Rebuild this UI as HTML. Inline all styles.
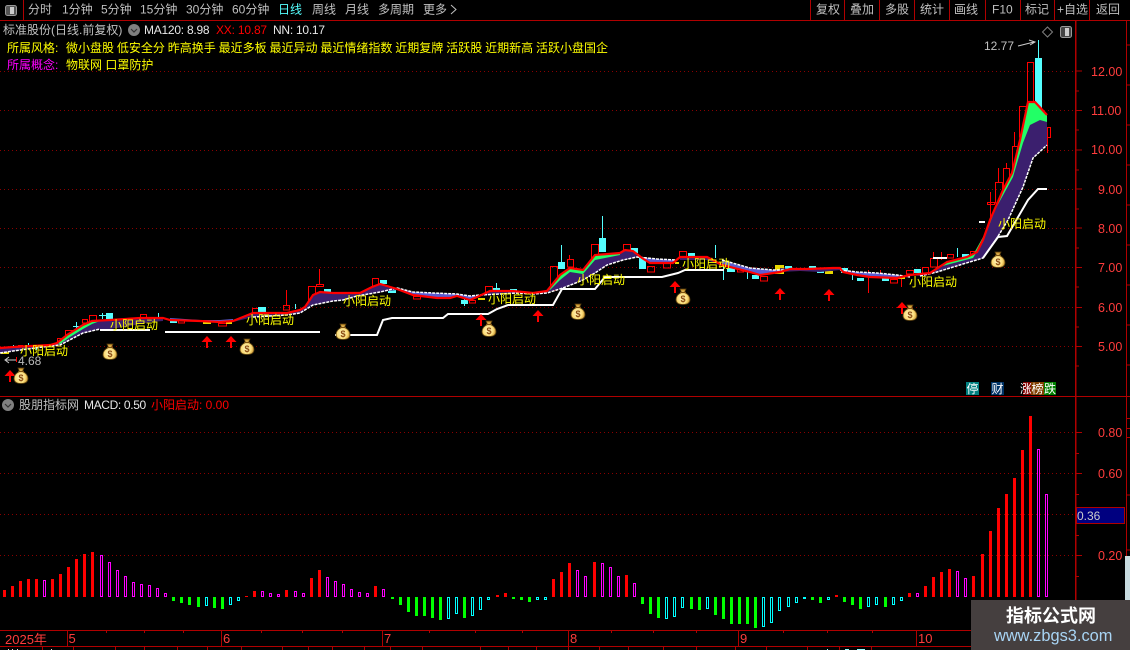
<!DOCTYPE html>
<html><head><meta charset="utf-8"><title>标准股份</title>
<style>
html,body{margin:0;padding:0;background:#000;width:1130px;height:650px;overflow:hidden}
svg{display:block}
text{font-family:"Liberation Sans","WenQuanYi Zen Hei","Noto Sans CJK SC",sans-serif;font-size:12px}
.m{fill:#c0c0c0}.y{fill:#ffff00}.a{fill:#ff3c3c;font-size:12.5px}.w{fill:#e8e8e8;letter-spacing:-.25px}
.t{fill:#ff3c3c;font-size:13px}
.d{font-size:9px;font-weight:bold;fill:#8a4a10;text-anchor:middle}
</style></head><body>
<svg width="1130" height="650" viewBox="0 0 1130 650" xmlns="http://www.w3.org/2000/svg">
<defs>
<radialGradient id="g" cx=".45" cy=".6" r=".6"><stop offset="0" stop-color="#fff6c0"/><stop offset=".6" stop-color="#fbdc78"/><stop offset="1" stop-color="#b87c18"/></radialGradient>
<g id="bag"><path d="M-3-8H3L1.500-4.500C5-3 7-.5 7 2.500 7 6 4 7.500 0 7.500S-7 6-7 2.500C-7-.5-5-3-1.500-4.500Z" fill="url(#g)" stroke="#5a4010" stroke-width=".8"/><path d="M-3-4.500H3" stroke="#7a5010" stroke-width="1.200"/></g>
<path id="ar" d="M0 0L5.500 6H1V12H-1V6H-5.500Z" fill="#f00"/>
</defs>

<!-- frame lines -->
<g stroke="#b00000" fill="none">
<path d="M0 20.500H1130M23.500 0V20M810.500 0V20M844.500 0V20M879.500 0V20M914.500 0V20M949.500 0V20M985.500 0V20M1020.500 0V20M1054.500 0V20M1089.500 0V20"/>
<path d="M0 396.500H1130M1075.500 20V600M1126.500 20V600" stroke-width="1"/>
<path d="M1076 20V600" />
<path d="M0 630.500H971M0 646.500H971"/>
<path d="M1076 71H1082M1076 91H1079M1076 110.500H1082M1076 130H1079M1076 150H1082M1076 170H1079M1076 189H1082M1076 209H1079M1076 228H1082M1076 248H1079M1076 267.500H1082M1076 287H1079M1076 307.500H1082M1076 327H1079M1076 346.500H1082M1076 366H1079"/>
<path d="M1076 432.500H1082M1076 453.500H1079M1076 473.500H1082M1076 494.500H1079M1076 514.500H1082M1076 535.500H1079M1076 555.500H1082M1076 576.500H1079"/>
<path d="M1126 45H1130M1126 85H1130M1126 125H1130M1126 165H1130M1126 205H1130M1126 245H1130M1126 285H1130M1126 325H1130M1126 365H1130M1126 418.500H1130M1126 428.500H1130M1126 437.500H1130M1126 495H1130M1126 550H1130"/>
<path d="M67.500 630V646M221.500 630V646M382.500 630V646M568.500 630V646M738.500 630V646M916.500 630V646"/>
<path d="M106.500 630V633M144.500 630V633M183.500 630V633M261.500 630V633M302.500 630V633M342.500 630V633M429.500 630V633M475.500 630V633M522.500 630V633M611.500 630V633M653.500 630V633M696.500 630V633M783.500 630V633M827.500 630V633M872.500 630V633"/>
<path d="M42.500 646V650M73.500 646V650M115.500 646V650M144.500 646V650M177.500 646V650M207.500 646V650M241.500 646V650M282.500 646V650M308.500 646V650M332.500 646V650M364.500 646V650M390.500 646V650M422.500 646V650M480.500 646V650M508.500 646V650M536.500 646V650M568.500 646V650M599.500 646V650M628.500 646V650M663.500 646V650M696.500 646V650M735.500 646V650M766.500 646V650M807.500 646V650M839.500 646V650M871.500 646V650"/>
</g>

<!-- grid -->
<g stroke="#8a0000" stroke-dasharray="1 3" fill="none">
<path d="M0 71.500H1075M0 110.500H1075M0 150.500H1075M0 189.500H1075M0 228.500H1075M0 267.500H1075M0 307.500H1075M0 346.500H1075"/>
<path d="M0 432.500H1075M0 473.500H1075M0 514.500H1075M0 555.500H1075"/>
</g>

<!-- toolbar -->
<rect x="5.500" y="5.500" width="11" height="10" rx="2" fill="#555" stroke="#999"/><rect x="10" y="7" width="4" height="7" fill="#ccc"/>
<g class="m">
<text class="m" x="28" y="13.500">分时</text><text class="m" x="62" y="13.500">1分钟</text><text class="m" x="101" y="13.500">5分钟</text><text class="m" x="140" y="13.500">15分钟</text><text class="m" x="186" y="13.500">30分钟</text><text class="m" x="232" y="13.500">60分钟</text>
<text x="278" y="13.500" fill="#55ffff">日线</text>
<text class="m" x="312" y="13.500">周线</text><text class="m" x="345" y="13.500">月线</text><text class="m" x="378" y="13.500">多周期</text><text class="m" x="423" y="13.500">更多</text>
<text class="m" x="816" y="13.500">复权</text><text class="m" x="850" y="13.500">叠加</text><text class="m" x="885" y="13.500">多股</text><text class="m" x="920" y="13.500">统计</text><text class="m" x="954" y="13.500">画线</text><text class="m" x="992" y="13.500">F10</text><text class="m" x="1025" y="13.500">标记</text><text class="m" x="1057" y="13.500">+自选</text><text class="m" x="1096" y="13.500">返回</text>
</g>
<path d="M451 5L456 9.500L451 14" stroke="#c0c0c0" fill="none"/>

<!-- header -->
<text class="m" x="3" y="34">标准股份(日线.前复权)</text>
<circle cx="134" cy="30" r="6" fill="#808080"/><path d="M131 29L134 32L137 29" stroke="#333" fill="none" stroke-width="1.200"/>
<text class="w" x="144" y="34">MA120: 8.98</text><text x="216" y="34" fill="#f00" style="letter-spacing:-.2px">XX: 10.87</text><text class="w" x="273" y="34">NN: 10.17</text>
<text class="y" x="7" y="52">所属风格:</text>
<text class="y" x="66" y="52" style="word-spacing:-.45px">微小盘股 低安全分 昨高换手 最近多板 最近异动 最近情绪指数 近期复牌 活跃股 近期新高 活跃小盘国企</text>
<text x="7" y="69" fill="#ff00ff">所属概念:</text>
<text class="y" x="66" y="69">物联网 口罩防护</text>
<path d="M1047.500 27L1052.500 32L1047.500 37L1042.500 32Z" fill="none" stroke="#808080"/>
<rect x="1060.500" y="26.500" width="11" height="11" rx="2" fill="#444" stroke="#999"/><rect x="1065" y="28" width="4" height="8" fill="#ccc"/>

<!-- axis labels -->
<text class="a" x="1091" y="76">12.00</text><text class="a" x="1091" y="115">11.00</text><text class="a" x="1091" y="154">10.00</text><text class="a" x="1098" y="194">9.00</text><text class="a" x="1098" y="233">8.00</text><text class="a" x="1098" y="272">7.00</text><text class="a" x="1098" y="312">6.00</text><text class="a" x="1098" y="351">5.00</text>
<text class="a" x="1098" y="437">0.80</text><text class="a" x="1098" y="478">0.60</text><text class="a" x="1098" y="560">0.20</text>
<rect x="1076.500" y="507.500" width="48" height="16" fill="#000080" stroke="#b00000"/><text x="1077" y="520" fill="#ccc" font-size="12">0.36</text>

<!-- candle wicks and hollow -->
<g fill="none" stroke="#f00">
<path d="M1014.500 132V146M1006.500 163V168M998.500 168V182M990.500 192V217M1047.500 137V153M286.500 290V305M319.500 269V284M561.500 258V262M569.500 255V259M868.500 270V293M880.500 270V274M901.500 278V287M933.500 252V258M941.500 252V260M16.500 357V362"/>
<path d="M1027.500 62.500H1033.500V102H1027.500ZM1019.500 106.500H1026.500V137H1019.500ZM1012.500 146.500H1018.500V170H1012.500ZM1003.500 168.500H1009.500V187H1003.500ZM995.500 182.500H1002.500V203H995.500ZM987.500 202.500H994.500V204.500H987.500ZM1047.500 127.500H1050.500V137.500H1047.500Z"/>
<path d="M18.500 345.500H22.500V349H18.500ZM57.500 338.500H63.500V343H57.500ZM65.500 330.500H72.500V338H65.500ZM82.500 319.500H87.500V323H82.500ZM89.500 315.500H96.500V321H89.500ZM140.500 314.500H146.500V319H140.500ZM178.500 320.500H184.500V323H178.500ZM218.500 323.500H226.500V326H218.500ZM252.500 308.500H258.500V313H252.500ZM283.500 305.500H289.500V310H283.500Z"/>
<path d="M308.500 286.500H315.500V302H308.500ZM316.500 284.500H323.500V286.500H316.500ZM372.500 278.500H378.500V286H372.500ZM413.500 296.500H420.500V299H413.500ZM469.500 300.500H475.500V303H469.500ZM485.500 286.500H492.500V293H485.500ZM550.500 266.500H557.500V290H550.500ZM567.500 259.500H573.500V267H567.500ZM591.500 244.500H598.500V262H591.500ZM623.500 244.500H630.500V250H623.500ZM647.500 266.500H654.500V272H647.500ZM663.500 263.500H670.500V268H663.500ZM679.500 251.500H686.500V257H679.500ZM737.500 268.500H743.500V272H737.500ZM760.500 276.500H767.500V281H760.500Z"/>
<path d="M890.500 279.500H897.500V283H890.500ZM906.500 270.500H913.500V274H906.500ZM922.500 267.500H928.500V273H922.500ZM930.500 258.500H937.500V267H930.500ZM947.500 254.500H953.500V258H947.500ZM970.500 251.500H975.500V257H970.500Z"/>
</g>
<!-- cyan candles -->
<g fill="#55ffff">
<rect x="1035" y="58" width="7" height="52"/><rect x="1038" y="40" width="1" height="18"/>
<path d="M13 345h1v5h-1zM28 343h1v6h-1zM36 346h1v4h-1zM73 326h7v1h-7zM76 322h1v8h-1zM99 315h7v1h-7zM102 313h1v6h-1z"/>
<rect x="106" y="313" width="7" height="6"/><rect x="158" y="313" width="1" height="7"/><rect x="170" y="319" width="7" height="4"/><rect x="258" y="307" width="8" height="5"/><rect x="295" y="304" width="1" height="5"/>
<rect x="324" y="289" width="7" height="4"/><rect x="380" y="280" width="7" height="4"/><rect x="388" y="290" width="8" height="3"/><rect x="461" y="300" width="7" height="4"/><rect x="464" y="295" width="1" height="11"/><rect x="493" y="288" width="7" height="4"/><rect x="496" y="283" width="1" height="5"/><rect x="510" y="289" width="7" height="3"/>
<rect x="558" y="262" width="7" height="7"/><rect x="561" y="245" width="1" height="17"/><rect x="599" y="238" width="7" height="14"/><rect x="602" y="216" width="1" height="22"/><rect x="631" y="248" width="7" height="5"/><rect x="639" y="257" width="7" height="12"/><rect x="688" y="253" width="7" height="4"/><rect x="715" y="245" width="1" height="13"/><rect x="723" y="263" width="1" height="17"/><rect x="727" y="268" width="8" height="4"/><rect x="747" y="272" width="1" height="7"/><rect x="752" y="275" width="7" height="4"/>
<rect x="785" y="266" width="7" height="3"/><rect x="809" y="266" width="7" height="3"/><rect x="817" y="269" width="7" height="4"/><rect x="841" y="268" width="7" height="5"/><rect x="852" y="273" width="1" height="7"/><rect x="857" y="278" width="7" height="3"/><rect x="882" y="277" width="7" height="4"/><rect x="914" y="269" width="7" height="4"/><rect x="957" y="248" width="1" height="9"/><rect x="962" y="254" width="7" height="3"/>
</g>
<g fill="#e8d800">
<rect x="1" y="350" width="8" height="4"/><rect x="203" y="322" width="8" height="2"/><rect x="226" y="322" width="6" height="2"/><rect x="478" y="298" width="7" height="2"/><rect x="675" y="262" width="4" height="2"/><rect x="775" y="265" width="9" height="9"/><rect x="825" y="271" width="8" height="3"/><rect x="898" y="277" width="7" height="2"/>
</g>

<!-- bands -->
<g fill="#3b1f6e">
<path d="M0 348L13 347 50 345 57 343 67 335 83 325 92 321 110 320 140 318 163 318V321L150 322 130 326 110 329 100 329 83 333 60 345 50 346 13 351 0 353Z"/>
<path d="M233 321L253 313 287 313 300 310 305 307 313 295 320 292 333 293 360 293 372 287 380 284 387 286 397 289V290L380 292 357 296 343 300 333 301 313 305 300 313 287 315 253 317 233 322Z"/>
<path d="M480 295L490 291 513 291 533 293 547 292V293L533 294 517 293 500 294 480 296Z"/>
<path d="M547 291L560 275 570 268 583 270 595 255 620 253 625 250 633 251 642 258 637 257 623 260 607 265 595 273 583 280 563 288 547 292Z"/>
<path d="M680 257H707L722 265V266L707 260 680 260Z"/>
<path d="M780 268L790 269 807 269 833 268 840 268V270L820 272 800 271 780 272Z"/>
<path d="M910 275L930 273 947 262 967 257 977 252 983 240 990 220 1003 190 1012 173 1020 140 1028 102 1035 102 1047 115V145L1033 158 1023 187 1008 220 997 238 983 258 963 264 937 272 920 276Z"/>
</g>
<g fill="#5c5cd0">
<path d="M170 318L200 320 220 320 233 319V321L220 322 200 321 170 320Z"/>
<path d="M397 288L413 292 433 293 457 294 470 296 480 295 477 297 470 300 457 296 450 298 437 298 413 295 397 289Z"/>
<path d="M640 257L657 259 676 260 673 263 650 263 642 258Z"/>
<path d="M722 260L727 262 750 268 773 270 785 270 780 272 760 275 750 272 722 265Z"/>
<path d="M840 270L857 272 877 273 897 275 910 277 910 275 897 278 870 277 857 275 843 272Z"/>
</g>
<g fill="#22ff66">
<path d="M57 343L67 335 83 325 92 321 100 321 92 324 83 329 70 337 60 344Z"/>
<path d="M549 289L560 275 570 268 583 270 595 255 605 254 620 254V255L605 258 595 260 583 274 570 272 560 280 550 290Z"/>
<path d="M935 268L947 262 967 257 973 255 983 237 990 220 1003 190 1012 173 1020 140 1028 102 1035 102 1047 115V122L1040 120 1030 125 1023 143 1013 177 995 210 983 242 973 258 950 264Z"/>
</g>
<!-- white dotted edges -->
<g fill="none" stroke="#fff" stroke-width="1.500" stroke-dasharray="3 1">
<path d="M0 353L13 351 50 346 60 345 83 333 100 329"/>
<path d="M253 317L287 315 300 313 313 305 333 301 343 300 357 296 380 292 397 288 413 292 433 293 457 294 470 296 480 295 500 294 517 293 533 294 547 293 563 288 583 280 595 273 607 265 623 260 637 257 657 259 676 260"/>
<path d="M722 260L750 268 773 270 785 270"/>
<path d="M840 270L857 272 877 273 897 275 910 277"/>
<path d="M920 276L937 272 963 264 983 258 997 238 1008 220 1023 187 1033 158 1047 145"/>
</g>
<!-- red MA -->
<path fill="none" stroke="#f00" stroke-width="2.200" d="M0 348L13 347 50 345 57 343 67 335 83 325 92 321 110 320 140 318 163 318 170 320 200 321 220 322 233 321 253 313 287 313 300 310 305 307 313 295 320 292 333 293 360 293 372 287 380 284 387 286 397 289 413 295 437 298 450 298 457 296 470 300 477 297 490 291 513 291 533 293 547 291 560 275 570 268 583 270 595 255 620 253 625 250 633 251 642 258 650 263 673 263 680 257 707 257 722 265 750 272 760 275 780 272 790 269 807 269 833 268 840 268 843 272 857 275 870 277 897 278 910 275 930 273 947 262 967 257 977 252 983 240 990 220 1003 190 1012 173 1020 140 1028 102 1035 102 1047 115"/>
<!-- thick white -->
<g fill="none" stroke="#fff" stroke-width="2">
<path d="M100 330H150M165 332H320M335 335H377L383 320 392 318H443L448 314H488L497 309 508 305H553L562 289H595L605 277H662L678 273 685 270H724"/>
<path d="M933 258H947M979 222H985M983 258L998 237 1007 236 1028 200 1038 189H1047"/>
</g>

<!-- labels -->
<g class="y">
<text class="y" x="20" y="355">小阳启动</text><text class="y" x="110" y="329">小阳启动</text><text class="y" x="246" y="324">小阳启动</text><text class="y" x="343" y="305">小阳启动</text><text class="y" x="488" y="303">小阳启动</text><text class="y" x="577" y="284">小阳启动</text><text class="y" x="682" y="268">小阳启动</text><text class="y" x="909" y="286">小阳启动</text><text class="y" x="998" y="228">小阳启动</text>
</g>
<text x="18" y="365" fill="#b8b8b8">4.68</text>
<path d="M16 360H6M9 357L5 360L9 363" stroke="#ccc" fill="none"/>
<text x="984" y="50" fill="#c0c0c0">12.77</text>
<path d="M1018 46L1034 42M1029 40L1035 42L1030 45" stroke="#ccc" fill="none"/>

<!-- arrows -->
<use href="#ar" x="10" y="370"/><use href="#ar" x="207" y="336"/><use href="#ar" x="231" y="336"/><use href="#ar" x="481" y="314"/><use href="#ar" x="538" y="310"/><use href="#ar" x="675" y="281"/><use href="#ar" x="780" y="288"/><use href="#ar" x="829" y="289"/><use href="#ar" x="902" y="302"/>
<!-- bags -->
<use href="#bag" x="21" y="376"/><text class="d" x="21" y="381">$</text>
<use href="#bag" x="110" y="352"/><text class="d" x="110" y="357">$</text>
<use href="#bag" x="247" y="347"/><text class="d" x="247" y="352">$</text>
<use href="#bag" x="343" y="332"/><text class="d" x="343" y="337">$</text>
<use href="#bag" x="489" y="329"/><text class="d" x="489" y="334">$</text>
<use href="#bag" x="578" y="312"/><text class="d" x="578" y="317">$</text>
<use href="#bag" x="683" y="297"/><text class="d" x="683" y="302">$</text>
<use href="#bag" x="910" y="313"/><text class="d" x="910" y="318">$</text>
<use href="#bag" x="998" y="260"/><text class="d" x="998" y="265">$</text>

<!-- badges -->
<rect x="966" y="382" width="13" height="13" fill="#008080"/><text x="966.500" y="393" fill="#fff">停</text>
<rect x="991" y="382" width="13" height="13" fill="#003366"/><text x="991.500" y="393" fill="#fff">财</text>
<rect x="1023" y="382" width="8" height="13" fill="#800000"/><text x="1020" y="393" fill="#fff">涨</text>
<rect x="1031" y="382" width="13" height="13" fill="#804000"/><text x="1031.500" y="393" fill="#fff">榜</text>
<rect x="1044" y="382" width="12" height="13" fill="#008000"/><text x="1044" y="393" fill="#fff">跌</text>

<!-- MACD header -->
<circle cx="8" cy="405" r="6" fill="#808080"/><path d="M5 404L8 407L11 404" stroke="#333" fill="none" stroke-width="1.200"/>
<text class="m" x="19" y="409">股朋指标网</text><text class="w" x="84" y="409" style="letter-spacing:-.35px">MACD: 0.50</text><text x="151" y="409" fill="#f00">小阳启动: 0.00</text>

<!-- MACD bars -->
<path fill="#f00" d="M3 590h3V597h-3zM11 586h3V597h-3zM19 581h3V597h-3zM27 579h3V597h-3zM35 579h3V597h-3zM51 579h3V597h-3zM59 574h3V597h-3zM67 567h3V597h-3zM75 559h3V597h-3zM83 554h3V597h-3zM91 552h3V597h-3zM245 596h3V597h-3zM253 591h3V597h-3zM285 590h3V597h-3zM310 578h3V597h-3zM318 570h3V597h-3zM374 586h3V597h-3zM496 595h3V597h-3zM504 593h3V597h-3zM552 579h3V597h-3zM560 572h3V597h-3zM568 563h3V597h-3zM593 562h3V597h-3zM625 575h3V597h-3zM835 595h3V597h-3zM908 593h3V597h-3zM924 586h3V597h-3zM932 577h3V597h-3zM940 572h3V597h-3zM948 569h3V597h-3zM972 576h3V597h-3zM981 554h3V597h-3zM989 531h3V597h-3zM997 508h3V597h-3zM1005 494h3V597h-3zM1013 478h3V597h-3zM1021 450h3V597h-3zM1029 416h3V597h-3z"/>
<path fill="none" stroke="#f0f" d="M43.500 580.500h2V596.500h-2zM100.500 555.500h2V596.500h-2zM108.500 562.500h2V596.500h-2zM116.500 570.500h2V596.500h-2zM124.500 576.500h2V596.500h-2zM132.500 582.500h2V596.500h-2zM140.500 584.500h2V596.500h-2zM148.500 585.500h2V596.500h-2zM156.500 588.500h2V596.500h-2zM164.500 593.500h2V596.500h-2zM261.500 591.500h2V596.500h-2zM269.500 593.500h2V596.500h-2zM277.500 594.500h2V596.500h-2zM294.500 591.500h2V596.500h-2zM302.500 593.500h2V596.500h-2zM326.500 577.500h2V596.500h-2zM334.500 581.500h2V596.500h-2zM342.500 584.500h2V596.500h-2zM350.500 589.500h2V596.500h-2zM358.500 592.500h2V596.500h-2zM366.500 593.500h2V596.500h-2zM382.500 589.500h2V596.500h-2zM576.500 570.500h2V596.500h-2zM584.500 576.500h2V596.500h-2zM601.500 563.500h2V596.500h-2zM609.500 567.500h2V596.500h-2zM617.500 576.500h2V596.500h-2zM633.500 583.500h2V596.500h-2zM916.500 593.500h2V596.500h-2zM956.500 571.500h2V596.500h-2zM964.500 578.500h2V596.500h-2zM1037.500 449.500h2V596.500h-2zM1045.500 494.500h2V596.500h-2z"/>
<path fill="#0f0" d="M172 597h3V601h-3zM180 597h3V603h-3zM188 597h3V605h-3zM197 597h3V607h-3zM213 597h3V608h-3zM221 597h3V609h-3zM391 597h3V599h-3zM399 597h3V605h-3zM407 597h3V612h-3zM415 597h3V616h-3zM423 597h3V616h-3zM431 597h3V618h-3zM439 597h3V620h-3zM463 597h3V618h-3zM512 597h3V599h-3zM520 597h3V600h-3zM528 597h3V602h-3zM641 597h3V604h-3zM649 597h3V614h-3zM657 597h3V618h-3zM690 597h3V609h-3zM698 597h3V610h-3zM714 597h3V615h-3zM722 597h3V619h-3zM730 597h3V624h-3zM738 597h3V624h-3zM746 597h3V624h-3zM754 597h3V628h-3zM811 597h3V600h-3zM819 597h3V603h-3zM843 597h3V602h-3zM851 597h3V605h-3zM859 597h3V609h-3zM884 597h3V607h-3z"/>
<path fill="none" stroke="#0ff" d="M205.500 597.500h2V605.500h-2zM229.500 597.500h2V604.500h-2zM237.500 597.500h2V600.500h-2zM447.500 597.500h2V618.500h-2zM455.500 597.500h2V613.500h-2zM471.500 597.500h2V615.500h-2zM479.500 597.500h2V609.500h-2zM487.500 597.500h2V599.500h-2zM536.500 597.500h2V599.500h-2zM544.500 597.500h2V599.500h-2zM665.500 597.500h2V618.500h-2zM673.500 597.500h2V616.500h-2zM681.500 597.500h2V607.500h-2zM706.500 597.500h2V608.500h-2zM762.500 597.500h2V626.500h-2zM770.500 597.500h2V622.500h-2zM778.500 597.500h2V610.500h-2zM787.500 597.500h2V606.500h-2zM795.500 597.500h2V602.500h-2zM827.500 597.500h2V599.500h-2zM867.500 597.500h2V606.500h-2zM875.500 597.500h2V604.500h-2zM892.500 597.500h2V604.500h-2zM900.500 597.500h2V600.500h-2z"/>
<rect x="803" y="597" width="3" height="2" fill="#0ff"/>

<!-- time axis -->
<text class="t" x="5" y="644">2025年</text><text class="t" x="68.500" y="643">5</text><text class="t" x="223" y="643">6</text><text class="t" x="384" y="643">7</text><text class="t" x="570" y="643">8</text><text class="t" x="740" y="643">9</text><text class="t" x="918" y="643">10</text>
<path d="M8 649h1v1h-1zM12 649h1v1h-1zM17 649h1v1h-1zM51 649h1v1h-1z" fill="#ddd"/>
<path d="M827 649h1v1h-1zM845 649h4v1h-4zM857 649h8v1h-8z" fill="#9ff"/>

<!-- watermark -->
<rect x="1125" y="556" width="5" height="44" fill="#c8dce0"/>
<rect x="971" y="600" width="159" height="50" fill="#453f3f"/>
<text x="1006" y="622" fill="#fff" style="font-size:18px;font-weight:bold">指标公式网</text>
<text x="994" y="641" fill="#a8d4f4" style="font-size:16.400px">www.zbgs3.com</text>
</svg>
</body></html>
